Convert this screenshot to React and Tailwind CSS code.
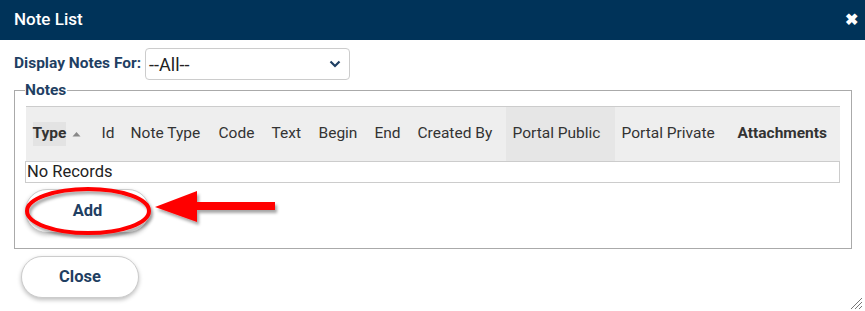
import React from 'react';

const columns = [
  { label: 'Type', w: 69, bold: true, sort: true },
  { label: 'Id', w: 29 },
  { label: 'Note Type', w: 88 },
  { label: 'Code', w: 53 },
  { label: 'Text', w: 47 },
  { label: 'Begin', w: 56 },
  { label: 'End', w: 43 },
  { label: 'Created By', w: 95 },
  { label: 'Portal Public', w: 109, shaded: true },
  { label: 'Portal Private', w: 116 },
  { label: 'Attachments', w: 109, bold: true },
];

const App = () => {
  return (
    <div className="relative w-[865px] h-[311px] bg-white overflow-hidden font-['Roboto',sans-serif]">
      {/* title bar */}
      <div className="h-10 bg-[#003359] flex items-center justify-between pl-[14px] pr-[7px]">
        <span className="text-white text-[17px] font-medium">Note List</span>
        <span className="text-white text-[16px] font-bold leading-none">✖</span>
      </div>

      <div className="pl-[14px] pr-[14px]">
        <div className="flex items-center gap-[4px] mt-2 h-8">
          <span className="text-[15.5px] font-bold text-[#1f3f63]">Display Notes For:</span>
          <div className="w-[205px] h-8 border border-[#ccc] rounded-[4px] flex items-center justify-between pl-[3px] pr-[8px]">
            <span className="text-[18px] text-[#222]">--All--</span>
            <svg width="12" height="8" viewBox="0 0 12 8">
              <path d="M1.5 1.5 L6 6 L10.5 1.5" fill="none" stroke="#1f3f63" strokeWidth="2.2" />
            </svg>
          </div>
        </div>

        <fieldset className="mt-[2px] border border-[#aaa] pl-[10px] pr-[11px] pb-[13px] h-[167px]">
          <legend className="text-[15.5px] font-bold text-[#1f3f63] leading-[17px] pr-[1px]">Notes</legend>
          <table className="table-fixed border-collapse w-[814px] mt-[7px] text-[15.5px] text-[#333]">
            <colgroup>
              {columns.map((c) => (
                <col key={c.label} style={{ width: c.w }} />
              ))}
            </colgroup>
            <thead>
              <tr className="h-[55px] bg-[#eee] border-t border-b border-[#ccc]">
                {columns.map((c) => (
                  <th
                    key={c.label}
                    className={`text-left px-[7px] whitespace-nowrap ${c.bold ? 'font-bold' : 'font-normal'} ${c.shaded ? 'bg-[#e6e6e6]' : ''}`}
                  >
                    {c.sort ? (
                      <span className="inline-flex items-center gap-[6px]">
                        <span className="bg-[#e3e3e3]">{c.label}</span>
                        <svg width="9" height="6" viewBox="0 0 9 6">
                          <path d="M0.5 5.5 L4.5 1 L8.5 5.5 Z" fill="#888" />
                        </svg>
                      </span>
                    ) : (
                      c.label
                    )}
                  </th>
                ))}
              </tr>
            </thead>
            <tbody>
              <tr className="h-[21px] border-b border-l border-r border-[#ccc]">
                <td colSpan={11} className="px-[1px] text-[16.5px] text-[#222] leading-[20px]">No Records</td>
              </tr>
            </tbody>
          </table>

          <div className="relative mt-[6px] h-[46px]">
            <button className="w-[125px] h-[44px] rounded-full border border-[#ccc] bg-white shadow-[0_2px_4px_rgba(0,0,0,0.25)] text-[16.5px] font-bold text-[#1f3f63]">
              Add
            </button>
            {/* red callout */}
            <svg className="absolute left-[-2px] top-[-6px]" width="270" height="56" viewBox="0 0 270 56">
              <defs>
                <filter id="sh" x="-10%" y="-30%" width="130%" height="180%">
                  <feDropShadow dx="2" dy="3" stdDeviation="1.5" floodColor="#000" floodOpacity="0.35" />
                </filter>
              </defs>
              <ellipse cx="65" cy="28" rx="61" ry="22" fill="none" stroke="#f00" strokeWidth="4" filter="url(#sh)" />
              <path d="M132 24 L174 8 L174 19 L252 19 L252 27 L174 27 L174 39 Z" fill="#f00" filter="url(#sh)" />
            </svg>
          </div>
        </fieldset>

        <button className="mt-[7px] ml-[7px] w-[118px] h-[42px] rounded-full border border-[#ccc] bg-white shadow-[0_2px_4px_rgba(0,0,0,0.25)] text-[16.5px] font-bold text-[#1f3f63]">
          Close
        </button>
      </div>

      {/* resize grip */}
      <svg className="absolute right-[3px] bottom-[2px]" width="12" height="12" viewBox="0 0 12 12">
        <path d="M1 12 L12 1 M5 12 L12 5 M9 12 L12 9" stroke="#777" strokeWidth="1" />
      </svg>
    </div>
  );
};

export default App;
